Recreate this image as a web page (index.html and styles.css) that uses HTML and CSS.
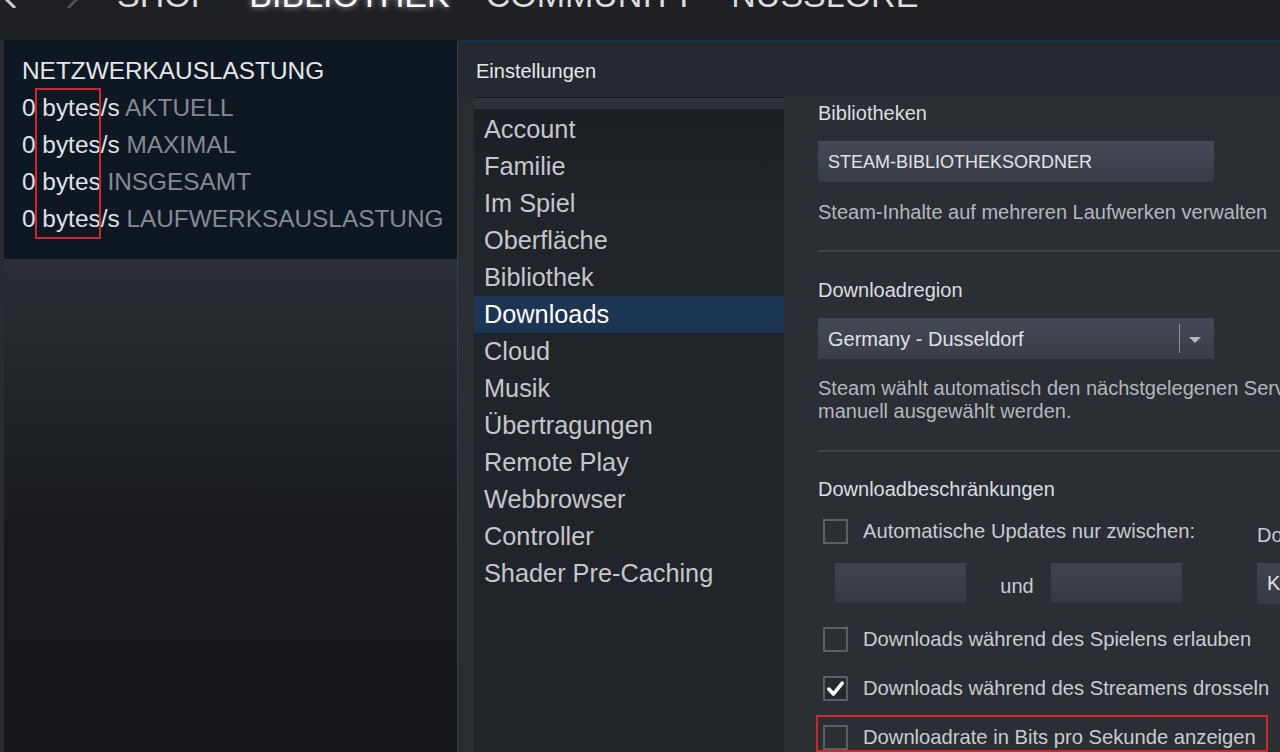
FILE: index.html
```html
<!DOCTYPE html>
<html lang="de">
<head>
<meta charset="utf-8">
<title>Steam – Einstellungen</title>
<link rel="stylesheet" href="styles.css">
</head>
<body>
<header class="topbar">
  <svg class="nav-arrow back" viewBox="0 0 14 20" width="14" height="20"><path d="M12 0 L2 10 L12 20" fill="none" stroke="#c9cbce" stroke-width="3"/></svg>
  <svg class="nav-arrow fwd" viewBox="0 0 14 20" width="14" height="20"><path d="M2 0 L12 10 L2 20" fill="none" stroke="#4e5055" stroke-width="3"/></svg>
  <nav class="nav">
    <span class="nav-item">SHOP</span>
    <span class="nav-item active">BIBLIOTHEK</span>
    <span class="nav-item">COMMUNITY</span>
    <span class="nav-item">NUSSLORE</span>
  </nav>
</header>
<main class="main">
  <aside class="leftcol">
    <section class="netpanel">
      <h2 class="net-title">NETZWERKAUSLASTUNG</h2>
      <div class="net-row"><span class="val">0 bytes/s</span> <span class="lbl">AKTUELL</span></div>
      <div class="net-row"><span class="val">0 bytes/s</span> <span class="lbl">MAXIMAL</span></div>
      <div class="net-row"><span class="val">0 bytes</span> <span class="lbl">INSGESAMT</span></div>
      <div class="net-row"><span class="val">0 bytes/s</span> <span class="lbl">LAUFWERKSAUSLASTUNG</span></div>
      <div class="mark-net"></div>
    </section>
    <div class="fill"></div>
  </aside>
  <section class="dialog">
    <div class="dlg-title">Einstellungen</div>
    <div class="dlg-body">
      <div class="list">
        <div class="list-head"></div>
        <ul class="items">
          <li>Account</li>
          <li>Familie</li>
          <li>Im Spiel</li>
          <li>Oberfläche</li>
          <li>Bibliothek</li>
          <li class="active">Downloads</li>
          <li>Cloud</li>
          <li>Musik</li>
          <li>Übertragungen</li>
          <li>Remote Play</li>
          <li>Webbrowser</li>
          <li>Controller</li>
          <li>Shader Pre-Caching</li>
        </ul>
      </div>
      <div class="content">
        <div class="label">Bibliotheken</div>
        <div class="button">STEAM-BIBLIOTHEKSORDNER</div>
        <div class="desc first">Steam-Inhalte auf mehreren Laufwerken verwalten</div>
        <div class="sep"></div>
        <div class="label region">Downloadregion</div>
        <div class="select">
          <span class="select-text">Germany - Dusseldorf</span>
          <span class="select-div"></span>
          <svg class="caret" viewBox="0 0 12 6" width="12" height="6"><path d="M0 0 H12 L6 6 Z" fill="#b4b7bb"/></svg>
        </div>
        <div class="desc two">Steam wählt automatisch den nächstgelegenen Server aus, dieser kann aber auch<br>manuell ausgewählt werden.</div>
        <div class="sep second"></div>
        <div class="label limits-label">Downloadbeschränkungen</div>
        <div class="limits">
          <div class="limits-left">
            <div class="row"><span class="cb"></span><span class="row-text">Automatische Updates nur zwischen:</span></div>
            <div class="times">
              <span class="field"></span>
              <span class="und">und</span>
              <span class="field"></span>
            </div>
          </div>
          <div class="limits-right">
            <div class="bw-label">Downloadbandbreite begrenzen auf:</div>
            <div class="bw-select">Keine Begrenzung</div>
          </div>
        </div>
        <div class="row r-play"><span class="cb"></span><span class="row-text">Downloads während des Spielens erlauben</span></div>
        <div class="row r-stream"><span class="cb checked"><svg viewBox="0 0 25 25" width="22" height="22"><path d="M4.5 12.5 L10 18.5 L20.5 5.5" fill="none" stroke="#ffffff" stroke-width="4.2" stroke-linejoin="round" stroke-linecap="round"/></svg></span><span class="row-text">Downloads während des Streamens drosseln</span></div>
        <div class="highlight">
          <div class="row"><span class="cb"></span><span class="row-text">Downloadrate in Bits pro Sekunde anzeigen</span></div>
        </div>
      </div>
    </div>
  </section>
</main>
</body>
</html>
```
FILE: styles.css
```css
* { box-sizing: border-box; margin: 0; padding: 0; }
html, body { width: 1280px; height: 752px; overflow: hidden; }
body {
  background: #202124;
  font-family: "Liberation Sans", Arial, sans-serif;
  color: #dcdee0;
}

/* top bar */
.topbar {
  height: 40px;
  overflow: hidden;
  display: flex;
  align-items: flex-start;
  background: #1f2023;
}
.nav-arrow { display: block; margin-top: -12px; flex-shrink: 0; }
.nav-arrow.back { margin-left: 3px; }
.nav-arrow.fwd { margin-left: 49px; }
.nav {
  display: flex;
  gap: 36px;
  margin-left: 37px;
  margin-top: -22px;
  font-size: 34px;
  line-height: 34px;
  white-space: nowrap;
}
.nav-item { color: #dadcde; }
.nav-item.active { color: #ffffff; text-shadow: 0 0 6px rgba(255,255,255,0.65); }

/* main */
.main { display: flex; height: 712px; }

.leftcol {
  width: 457px;
  flex-shrink: 0;
  padding-left: 4px;
  background: #2a2c30;
  display: flex;
  flex-direction: column;
}
.netpanel {
  position: relative;
  height: 219px;
  background: #0e1822;
  padding: 12px 0 0 18px;
  font-size: 24.4px;
  line-height: 37px;
  white-space: nowrap;
}
.net-title { font-size: 24.4px; font-weight: normal; color: #e4e7ea; }
.net-row .val { color: #dfe2e5; }
.net-row .lbl { color: #858a91; }
.mark-net {
  position: absolute;
  left: 31px;
  top: 48px;
  width: 66px;
  height: 151px;
  border: 2px solid #d1262c;
}
.fill {
  flex: 1;
  background: linear-gradient(to bottom, #2b2e34 0, #1e2125 170px, #17191d 300px, #16181c 100%);
}

/* dialog */
.dialog {
  flex: 1;
  min-width: 0;
  display: flex;
  flex-direction: column;
  border-left: 1px solid #2f4156;
  border-top: 2px solid #173250;
  background: #2a2d32;
}
.dlg-title {
  height: 55px;
  flex-shrink: 0;
  padding: 17px 0 0 18px;
  font-size: 20px;
  line-height: 24px;
  color: #e6e8ea;
  background: #252930;
}
.dlg-body { flex: 1; display: flex; min-height: 0; }

.list {
  width: 310px;
  flex-shrink: 0;
  margin-left: 16px;
  border-top: 1px solid #16181b;
  background: linear-gradient(to bottom, #1b1e23 0, #212429 120px, #212429 100%);
}
.list-head { height: 11px; background: #2e3138; }
.items { list-style: none; padding-top: 2px; }
.items li {
  height: 37px;
  line-height: 37px;
  padding-left: 10px;
  font-size: 25.3px;
  color: #c4c7cb;
  white-space: nowrap;
}
.items li.active { background: #1b3552; color: #ffffff; }

.content {
  flex: 1;
  min-width: 0;
  overflow: hidden;
  background: #2b2e33;
  padding: 4px 0 0 34px;
  white-space: nowrap;
}
.label { font-size: 20px; line-height: 24px; color: #dcdee0; }
.label.region { margin-top: 26px; }
.label.limits-label { margin-top: 25px; }
.button {
  margin-top: 16px;
  width: 396px;
  height: 41px;
  padding: 2px 0 0 10px;
  display: flex;
  align-items: center;
  font-size: 18px;
  color: #e1e4e7;
  background: linear-gradient(to bottom, #454953, #393d46);
}
.desc { font-size: 20px; color: #b4b8bc; }
.desc.first { margin-top: 18px; line-height: 24px; }
.desc.two { margin-top: 18px; line-height: 23px; }
.sep { margin-top: 26px; height: 2px; background: #3f4247; }
.sep.second { margin-top: 27px; }

.select {
  margin-top: 16px;
  width: 396px;
  height: 41px;
  display: flex;
  align-items: center;
  padding: 2px 0 0 10px;
  font-size: 20px;
  color: #dfe2e5;
  background: linear-gradient(to bottom, #454953, #393d46);
}
.select-text { flex: 1; }
.select-div { width: 1px; height: 29px; margin-top: -2px; background: #8b8e93; }
.caret { margin: 0 13px 0 9px; }

.limits {
  margin-top: 18px;
  display: grid;
  grid-template-columns: 439px auto;
}
.row { display: flex; align-items: center; gap: 15px; height: 25px; }
.cb {
  width: 25px;
  height: 25px;
  margin-left: 5px;
  flex-shrink: 0;
  border: 2px solid #5c5f65;
  display: flex;
  align-items: center;
  justify-content: center;
}
.cb.checked { background: #26292e; }
.row-text { font-size: 20.2px; color: #c9ccd0; }
.times { margin-top: 19px; margin-left: 17px; display: flex; align-items: center; }
.field {
  width: 131px;
  height: 40px;
  background: linear-gradient(to bottom, #40444d, #363a42);
}
.und { width: 85px; text-align: center; font-size: 20px; color: #c9ccd0; padding: 6px 0 0 17px; }
.bw-label { margin-top: 4px; font-size: 20px; line-height: 24px; color: #c9ccd0; }
.bw-select {
  margin-top: 16px;
  width: 300px;
  height: 41px;
  padding-left: 10px;
  display: flex;
  align-items: center;
  font-size: 20px;
  color: #dfe2e5;
  background: linear-gradient(to bottom, #40444d, #363a42);
}
.r-play { margin-top: 23px; }
.r-stream { margin-top: 24px; }
.highlight {
  margin-top: 14px;
  margin-left: -2px;
  width: 452px;
  height: 37px;
  border: 2px solid #d1262c;
  padding-top: 8px;
}
```
